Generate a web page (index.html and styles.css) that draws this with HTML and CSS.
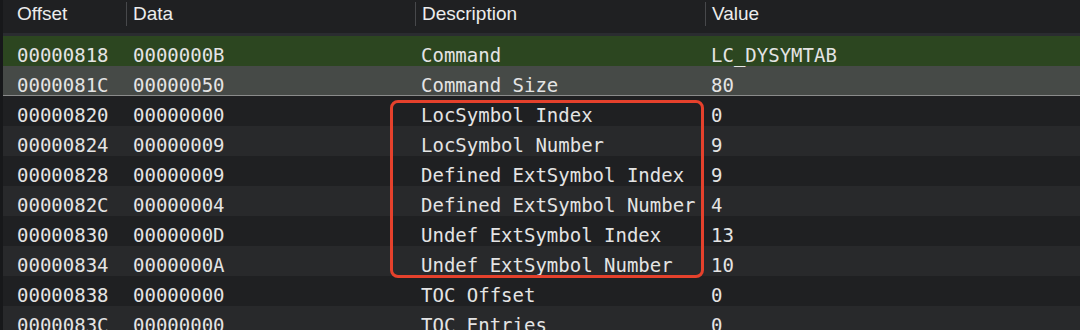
FILE: index.html
```html
<!DOCTYPE html>
<html>
<head>
<meta charset="utf-8">
<link rel="stylesheet" href="styles.css">
</head>
<body>
<div class="table">
  <div class="head">
    <div class="hc c-off">Offset</div>
    <div class="hc sep">Data</div>
    <div class="hc sep">Description</div>
    <div class="hc sep">Value</div>
  </div>
  <div class="rows">
    <div class="row green"><span class="c-off">00000818</span><span>0000000B</span><span>Command</span><span>LC_DYSYMTAB</span></div>
    <div class="row gray"><span class="c-off">0000081C</span><span>00000050</span><span>Command Size</span><span>80</span></div>
    <div class="row dark"><span class="c-off">00000820</span><span>00000000</span><span>LocSymbol Index</span><span>0</span></div>
    <div class="row light"><span class="c-off">00000824</span><span>00000009</span><span>LocSymbol Number</span><span>9</span></div>
    <div class="row dark"><span class="c-off">00000828</span><span>00000009</span><span>Defined ExtSymbol Index</span><span>9</span></div>
    <div class="row light"><span class="c-off">0000082C</span><span>00000004</span><span>Defined ExtSymbol Number</span><span>4</span></div>
    <div class="row dark"><span class="c-off">00000830</span><span>0000000D</span><span>Undef ExtSymbol Index</span><span>13</span></div>
    <div class="row light"><span class="c-off">00000834</span><span>0000000A</span><span>Undef ExtSymbol Number</span><span>10</span></div>
    <div class="row dark"><span class="c-off">00000838</span><span>00000000</span><span>TOC Offset</span><span>0</span></div>
    <div class="row light"><span class="c-off">0000083C</span><span>00000000</span><span>TOC Entries</span><span>0</span></div>
  </div>
  <div class="highlight"></div>
</div>
</body>
</html>
```
FILE: styles.css
```css
html, body {
  margin: 0;
  padding: 0;
  background: #17181a;
  width: 1080px;
  height: 330px;
  overflow: hidden;
}
.table {
  position: relative;
  margin-left: 3px;
  background: #1f2022;
  height: 330px;
}
.head, .row {
  display: grid;
  grid-template-columns: 123px 289px 290px 1fr;
}
.head {
  height: 33px;
  border-bottom: 3px solid #2a2c30;
  background: #1f2022;
  font-family: "Liberation Sans", Arial, sans-serif;
  font-size: 19px;
  color: #ececec;
}
.hc {
  margin-top: 2px;
  height: 24px;
  line-height: 24px;
  padding-left: 6px;
  white-space: nowrap;
}
.hc.c-off { padding-left: 14px; }
.hc.sep { border-left: 1px solid #47484b; }
.row {
  height: 30px;
  box-sizing: border-box;
  padding-top: 8px;
  line-height: 22px;
  font-family: "DejaVu Sans Mono", Menlo, monospace;
  font-size: 19px;
  color: #e4e4e4;
  white-space: nowrap;
}
.row span { padding-left: 6px; }
.row span:nth-child(2) { padding-left: 7px; }
.row span.c-off { padding-left: 14px; }
.green { background: #2c4620; }
.gray { background: #464a47; border-bottom: 1px solid #8a8b8b; height: 30px; }
.dark { background: #1f2022; }
.light { background: #28292b; }
.highlight {
  position: absolute;
  left: 387px;
  top: 100px;
  width: 314px;
  height: 178px;
  box-sizing: border-box;
  border: 3px solid #e5412c;
  border-radius: 8px;
}
```
